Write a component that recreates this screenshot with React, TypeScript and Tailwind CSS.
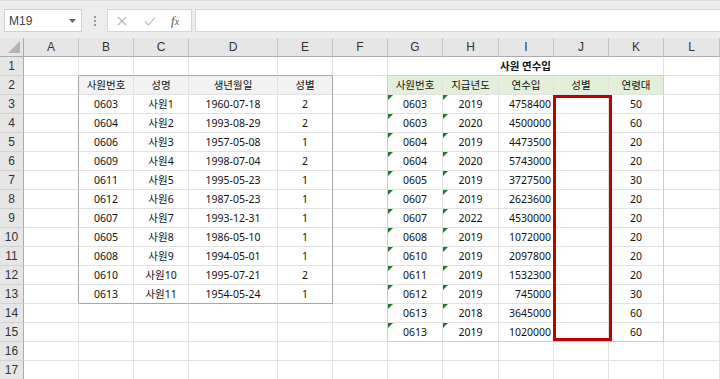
import React from "react";

const COLS = ["A", "B", "C", "D", "E", "F", "G", "H", "I", "J", "K", "L"];

const left: string[][] = [
  ["0603", "사원1", "1960-07-18", "2"],
  ["0604", "사원2", "1993-08-29", "2"],
  ["0606", "사원3", "1957-05-08", "1"],
  ["0609", "사원4", "1998-07-04", "2"],
  ["0611", "사원5", "1995-05-23", "1"],
  ["0612", "사원6", "1987-05-23", "1"],
  ["0607", "사원7", "1993-12-31", "1"],
  ["0605", "사원8", "1986-05-10", "1"],
  ["0608", "사원9", "1994-05-01", "1"],
  ["0610", "사원10", "1995-07-21", "2"],
  ["0613", "사원11", "1954-05-24", "1"],
];

const right: string[][] = [
  ["0603", "2019", "4758400", "50"],
  ["0603", "2020", "4500000", "60"],
  ["0604", "2019", "4473500", "20"],
  ["0604", "2020", "5743000", "20"],
  ["0605", "2019", "3727500", "30"],
  ["0607", "2019", "2623600", "20"],
  ["0607", "2022", "4530000", "20"],
  ["0608", "2019", "1072000", "20"],
  ["0610", "2019", "2097800", "20"],
  ["0611", "2019", "1532300", "20"],
  ["0612", "2019", "745000", "30"],
  ["0613", "2018", "3645000", "60"],
  ["0613", "2019", "1020000", "60"],
];

type CellInfo = { text?: string; align?: "c" | "r"; bold?: boolean; bg?: string; tri?: boolean };

function cellContent(r: number, c: number): CellInfo {
  // left table
  if (r === 2 && c >= 2 && c <= 5) {
    return { text: ["사원번호", "성명", "생년월일", "성별"][c - 2], align: "c", bg: "bg-[#f2f2f2]" };
  }
  if (r >= 3 && r <= 13 && c >= 2 && c <= 5) {
    return { text: left[r - 3][c - 2], align: "c" };
  }
  if (r === 2 && c >= 7 && c <= 11) {
    return { text: ["사원번호", "지급년도", "연수입", "성별", "연령대"][c - 7], align: "c", bg: "bg-[#e2efda]" };
  }
  if (r >= 3 && r <= 15 && c >= 7 && c <= 11) {
    const row = right[r - 3];
    if (c === 7) return { text: row[0], align: "c", tri: true };
    if (c === 8) return { text: row[1], align: "c", tri: true };
    if (c === 9) return { text: row[2], align: "r" };
    if (c === 10) return {};
    return { text: row[3], align: "c" };
  }
  return {};
}

function rightBorder(r: number, c: number): string {
  if ((c === 1 || c === 5) && r >= 2 && r <= 13) return "border-r-[#a6a6a6]";
  if ((c === 6 || c === 11) && r >= 2 && r <= 15) return "border-r-[#bcdca8]";
  return "border-r-[#e1e1e1]";
}

function bottomBorder(r: number, c: number): string {
  if ((r === 1 || r === 13) && c >= 2 && c <= 5) return "border-b-[#a6a6a6]";
  if ((r === 1 || r === 15) && c >= 7 && c <= 11) return "border-b-[#bcdca8]";
  return "border-b-[#e1e1e1]";
}

function Cell({ r, c }: { r: number; c: number }) {
  const info = cellContent(r, c);
  const rb = rightBorder(r, c);
  const bb = bottomBorder(r, c);
  return (
    <div
      className={`relative h-[19px] border-r border-b ${rb} ${bb} ${info.bg ?? "bg-white"} flex items-center ${
        info.align === "r" ? "justify-end pr-[2px]" : "justify-center"
      } text-[10.5px] text-[#111] leading-none whitespace-nowrap overflow-visible`}
    >
      {info.tri && (
        <svg className="absolute left-0 top-0" width="5" height="5" viewBox="0 0 5 5">
          <polygon points="0,0 5,0 0,5" fill="#217a2c" />
        </svg>
      )}
      {info.text}
    </div>
  );
}

export default function App() {
  const rows = Array.from({ length: 17 }, (_, i) => i + 1);
  return (
    <div
      className="w-[720px] h-[379px] overflow-hidden bg-white"
      style={{ fontFamily: '"Noto Sans", "Noto Sans CJK KR", sans-serif' }}
    >
      {/* formula bar */}
      <div className="h-[38px] bg-[#ededed] border-t border-t-[#dcdcdc] flex items-start pt-[8px]">
        <div className="ml-[4px] w-[78px] h-[23px] bg-white border border-[#cfcfcf] flex items-center justify-between px-[4px]">
          <span className="text-[12px] text-[#444]" style={{ fontFamily: '"Liberation Sans", sans-serif' }}>
            M19
          </span>
          <svg width="7" height="4" viewBox="0 0 7 4" className="mr-[1px]">
            <polygon points="0,0 7,0 3.5,4" fill="#666" />
          </svg>
        </div>
        <div className="w-[25px] h-[23px] flex flex-col items-center justify-center gap-[2px]">
          <span className="w-[2px] h-[2px] bg-[#9a9a9a]" />
          <span className="w-[2px] h-[2px] bg-[#9a9a9a]" />
          <span className="w-[2px] h-[2px] bg-[#9a9a9a]" />
        </div>
        <div className="w-[85px] h-[23px] bg-white border border-[#d6d6d6] flex items-center">
          <svg width="10" height="10" viewBox="0 0 10 10" className="ml-[9px]">
            <path d="M1 1 L9 9 M9 1 L1 9" stroke="#b5b5b5" strokeWidth="1.1" />
          </svg>
          <svg width="12" height="10" viewBox="0 0 12 10" className="ml-[17px]">
            <path d="M1 5.5 L4.5 9 L11 1.5" stroke="#b5b5b5" strokeWidth="1.1" fill="none" />
          </svg>
          <span
            className="ml-[15px] text-[13px] italic text-[#555] leading-none"
            style={{ fontFamily: '"Liberation Serif", serif' }}
          >
            f<span className="text-[10px]">x</span>
          </span>
        </div>
        <div className="ml-[3px] flex-1 h-[23px] bg-white border border-[#d6d6d6] border-r-0" />
      </div>

      {/* sheet */}
      <div className="relative grid grid-cols-[24px_55px_55px_55px_89px_55px_55px_55px_56px_55px_55px_55px_56px]">
        {/* header row */}
        <div className="h-[19px] bg-[#e6e6e6] border-r border-b border-r-[#ababab] border-b-[#ababab] relative">
          <svg className="absolute right-[3px] bottom-[3px]" width="12" height="12" viewBox="0 0 12 12">
            <polygon points="12,0 12,12 0,12" fill="#b4b4b4" />
          </svg>
        </div>
        {COLS.map((c) => (
          <div
            key={c}
            className="h-[19px] bg-[#e6e6e6] border-r border-b border-r-[#c4c4c4] border-b-[#ababab] flex items-center justify-center text-[12px] text-[#333]"
            style={{ fontFamily: '"Liberation Sans", sans-serif' }}
          >
            {c}
          </div>
        ))}

        {rows.map((r) => (
          <React.Fragment key={r}>
            <div
              className="h-[19px] bg-[#e6e6e6] border-r border-b border-r-[#ababab] border-b-[#d2d2d2] flex items-center justify-center text-[12px] text-[#333]"
              style={{ fontFamily: '"Liberation Sans", sans-serif' }}
            >
              {r}
            </div>
            {r === 1 ? (
              <>
                {[1, 2, 3, 4, 5, 6].map((c) => (
                  <Cell key={c} r={r} c={c} />
                ))}
                <div className="col-span-5 h-[19px] border-r border-b border-r-[#e1e1e1] border-b-[#bcdca8] bg-white flex items-center justify-center text-[10.5px] font-bold text-[#111] leading-none">
                  사원 연수입
                </div>
                <Cell r={r} c={12} />
              </>
            ) : (
              [1, 2, 3, 4, 5, 6, 7, 8, 9, 10, 11, 12].map((c) => <Cell key={c} r={r} c={c} />)
            )}
          </React.Fragment>
        ))}

        {/* red highlight box over J3:J15 */}
        <div className="absolute left-[553px] top-[57px] w-[59px] h-[246px] border-[3px] border-[#c00000] pointer-events-none" />
      </div>
    </div>
  );
}
